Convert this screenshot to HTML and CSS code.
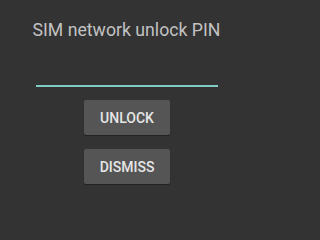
FILE: index.html
```html
<!DOCTYPE html>
<html>
<head>
<meta charset="utf-8">
<link rel="stylesheet" href="styles.css">
</head>
<body>
<div class="dialog">
  <div class="title">SIM network unlock PIN</div>
  <div class="input"></div>
  <button class="btn">UNLOCK</button>
  <button class="btn btn-second">DISMISS</button>
</div>
</body>
</html>
```

FILE: styles.css
```css
html, body {
  margin: 0;
  padding: 0;
  background: #333333;
  width: 250px;
  height: 220px;
  overflow: hidden;
}
.dialog {
  display: flex;
  flex-direction: column;
  align-items: center;
  font-family: Roboto, "Liberation Sans", sans-serif;
}
.title {
  margin-top: 20px;
  margin-left: 3px;
  font-size: 17.7px;
  line-height: 20px;
  color: #c2c2c2;
  white-space: nowrap;
}
.input {
  margin-top: 45px;
  width: 182px;
  height: 2px;
  background: #80cbc4;
  margin-left: 4px;
}
.btn {
  width: 86px;
  height: 35px;
  border: none;
  border-radius: 2px;
  background: #555555;
  color: #e6e6e6;
  font-family: Roboto, "Liberation Sans", sans-serif;
  font-weight: 500;
  font-size: 14px;
  padding: 0;
  margin-top: 13px;
  box-shadow: 0 1px 1px rgba(0,0,0,0.35);
  margin-left: 4px;
}
.btn-second {
  margin-top: 14px;
}
```
